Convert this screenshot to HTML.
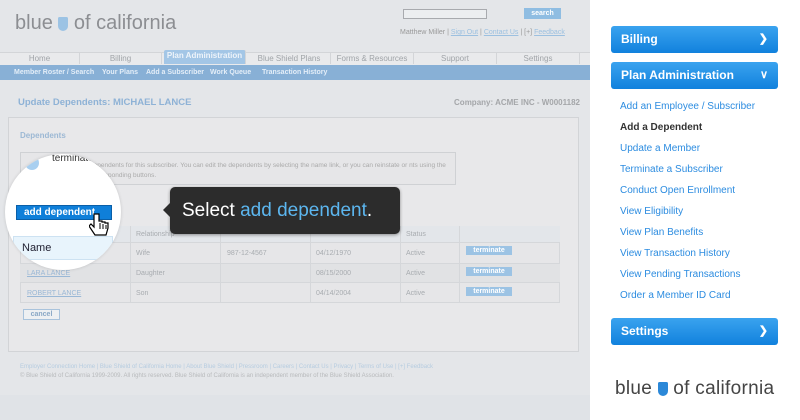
<!DOCTYPE html>
<html><head><style>
*{margin:0;padding:0;box-sizing:border-box}
body{width:800px;height:420px;overflow:hidden;position:relative;background:#fff;font-family:"Liberation Sans",sans-serif}
.a{position:absolute}
#L{left:0;top:0;width:590px;height:420px;background:#e4e6e9}
.tab{position:absolute;top:53px;height:11px;background:#e9eaec;border-right:1px solid #d3d5d8;font-size:8px;color:#a0a4a8;text-align:center;line-height:11px}
.sub{font-size:7px;font-weight:bold;color:#e4eef8;top:69px}
.cell{position:absolute;font-size:7px;color:#a8acb0}
.tb{position:absolute;left:466px;width:46px;height:9px;background:#9cc3e4;color:#fff;font-size:7px;font-weight:bold;text-align:center;line-height:9px}
.rb{position:absolute;left:611px;width:167px;height:27px;border-radius:3px;background:linear-gradient(#3aa3ef,#1181dd);color:#fff;font-weight:bold;font-size:12px;line-height:27px;padding-left:10px}
.rb span{position:absolute;right:10px;top:0;font-size:11px}
.lk{position:absolute;left:620px;font-size:10px;color:#2c8ce0}
</style></head><body>
<div id="L" class="a">
<div class="a" style="left:15px;top:12px;font-size:20px;color:#8c8e92;white-space:nowrap">blue <span style="display:inline-block;width:10px;height:14px;background:#9cc3e4;border-radius:2px 2px 6px 6px;vertical-align:-2px"></span> of california</div>
<div class="a" style="left:403px;top:9px;width:84px;height:10px;border:1px solid #a8aaae;background:#eceef0"></div>
<div class="a" style="left:524px;top:8px;width:37px;height:11px;background:#8fbde2;color:#fff;font-size:7px;text-align:center;line-height:11px;font-weight:bold">search</div>
<div class="a" style="left:400px;top:29px;font-size:7px;color:#999">Matthew Miller | <u style="color:#9cc0e0">Sign Out</u> | <u style="color:#9cc0e0">Contact Us</u> | [+] <u style="color:#9cc0e0">Feedback</u></div>
<div class="a" style="left:0;top:52px;width:590px;height:13px;background:#e9eaec;border-top:1px solid #d3d5d8"></div>
<div class="tab" style="left:0;width:80px">Home</div>
<div class="tab" style="left:80px;width:82px">Billing</div>
<div class="tab" style="left:164px;top:50px;height:14px;width:82px;background:#a3c6e6;color:#eef4fa;font-weight:bold;border-radius:2px 2px 0 0">Plan Administration</div>
<div class="tab" style="left:248px;width:83px">Blue Shield Plans</div>
<div class="tab" style="left:331px;width:83px">Forms &amp; Resources</div>
<div class="tab" style="left:414px;width:83px">Support</div>
<div class="tab" style="left:497px;width:83px">Settings</div>
<div class="a" style="left:0;top:65px;width:590px;height:15px;background:#88b0d6"></div>
<div class="a sub" style="left:14px">Member Roster / Search</div>
<div class="a sub" style="left:102px">Your Plans</div>
<div class="a sub" style="left:146px">Add a Subscriber</div>
<div class="a sub" style="left:210px">Work Queue</div>
<div class="a sub" style="left:262px">Transaction History</div>
<div class="a" style="left:18px;top:97px;font-size:9.5px;font-weight:bold;color:#8eb2d6">Update Dependents: MICHAEL LANCE</div>
<div class="a" style="left:440px;top:98px;font-size:8px;font-weight:bold;color:#a4a6a9;width:140px;text-align:right">Company: ACME INC - W0001182</div>
<div class="a" style="left:8px;top:117px;width:571px;height:235px;border:1px solid #d2d4d7;background:#e8e8ea"></div>
<div class="a" style="left:20px;top:131px;font-size:8px;font-weight:bold;color:#9cb8d4">Dependents</div>
<div class="a" style="left:20px;top:152px;width:436px;height:33px;border:1px solid #cfd1d4;background:#e6e6e8"></div>
<div class="a" style="left:90px;top:161px;font-size:6.5px;color:#aaa;line-height:10px;width:360px">dependents for this subscriber. You can edit the dependents by selecting the name link, or you can reinstate or nts using the corresponding buttons.</div>
<div class="a" style="left:20px;top:226px;width:540px;height:77px;border:1px solid #d5d7da;background:#e6e6e8"></div>
<div class="a" style="left:20px;top:226px;width:540px;height:17px;background:#e3e6ea;border-bottom:1px solid #d5d7da"></div>
<div class="a" style="left:20px;top:263px;width:540px;height:20px;background:#e1e2e4;border-top:1px solid #d5d7da;border-bottom:1px solid #d5d7da"></div>
<div class="a" style="left:130px;top:226px;width:1px;height:77px;background:#d5d7da"></div>
<div class="a" style="left:220px;top:226px;width:1px;height:77px;background:#d5d7da"></div>
<div class="a" style="left:310px;top:226px;width:1px;height:77px;background:#d5d7da"></div>
<div class="a" style="left:400px;top:226px;width:1px;height:77px;background:#d5d7da"></div>
<div class="a" style="left:459px;top:226px;width:1px;height:77px;background:#d5d7da"></div>
<div class="cell" style="left:136px;top:231px">Relationship</div>
<div class="cell" style="left:406px;top:231px">Status</div>
<div class="cell" style="left:136px;top:250px">Wife</div><div class="cell" style="left:227px;top:250px">987-12-4567</div><div class="cell" style="left:316px;top:250px">04/12/1970</div><div class="cell" style="left:406px;top:250px">Active</div>
<div class="cell" style="left:27px;top:270px;color:#9ab8d6;text-decoration:underline">LARA LANCE</div><div class="cell" style="left:136px;top:270px">Daughter</div><div class="cell" style="left:316px;top:270px">08/15/2000</div><div class="cell" style="left:406px;top:270px">Active</div>
<div class="cell" style="left:27px;top:290px;color:#9ab8d6;text-decoration:underline">ROBERT LANCE</div><div class="cell" style="left:136px;top:290px">Son</div><div class="cell" style="left:316px;top:290px">04/14/2004</div><div class="cell" style="left:406px;top:290px">Active</div>
<div class="tb" style="top:246px">terminate</div><div class="tb" style="top:267px">terminate</div><div class="tb" style="top:287px">terminate</div>
<div class="a" style="left:23px;top:309px;width:37px;height:11px;border:1px solid #a9c3dc;background:#eef0f2;font-size:7px;font-weight:bold;color:#8aa8c6;text-align:center;line-height:9px">cancel</div>
<div class="a" style="left:20px;top:364px;font-size:6px;color:#b6cce0">Employer Connection Home | Blue Shield of California Home | About Blue Shield | Pressroom | Careers | Contact Us | Privacy | Terms of Use | [+] Feedback</div>
<div class="a" style="left:20px;top:373px;font-size:6px;color:#b8babc">© Blue Shield of California 1999-2009. All rights reserved. Blue Shield of California is an independent member of the Blue Shield Association.</div>
<div class="a" style="left:0;top:395px;width:590px;height:25px;background:#e0e3e7"></div>
<div class="a" style="left:5px;top:154px;width:116px;height:116px;border-radius:50%;background:#fff;overflow:hidden;box-shadow:0 0 3px rgba(0,0,0,.15)">
 <div class="a" style="left:47px;top:-1px;font-size:10px;color:#333">terminate</div>
 <div class="a" style="left:20px;top:2px;width:14px;height:14px;border-radius:50%;background:#a8cff0"></div>
 <div class="a" style="left:11px;top:51px;width:96px;height:15px;background:#0f7fd9;border:1px solid #0a5fa8;color:#fff;font-size:10px;font-weight:bold;line-height:13px;padding-left:7px">add dependent</div>
 <div class="a" style="left:8px;top:82px;width:100px;height:24px;background:#e8f4fc;border:1px solid #cde2f2;font-size:11px;color:#223;line-height:22px;padding-left:8px">Name</div>
 <svg class="a" style="left:84px;top:58px" width="22" height="26" viewBox="0 0 22 26"><path d="M5 2v13l-3-3-2 2 6 9h11l2-7v-5h-3v-1h-3v-1h-3V2z" fill="#fff" stroke="#000" stroke-width="1.2"/><path d="M11 11v6M14 12v5M17 13v4" stroke="#000"/></svg>
</div>
<div class="a" style="left:170px;top:187px;width:230px;height:47px;background:#2c2c2c;border-radius:5px;color:#fff;font-size:19px;line-height:47px;padding-left:12px;box-shadow:0 1px 3px rgba(0,0,0,.4)">Select <span style="color:#5cb6ef">add dependent</span>.</div>
<div class="a" style="left:163px;top:203px;width:0;height:0;border-top:7px solid transparent;border-bottom:7px solid transparent;border-right:7px solid #2c2c2c"></div>
</div>
<div class="rb" style="top:26px">Billing<span>&#x276F;</span></div>
<div class="rb" style="top:62px">Plan Administration<span>&#x2228;</span></div>
<div class="lk" style="top:101px">Add an Employee / Subscriber</div>
<div class="lk" style="top:122px;color:#333;font-weight:bold">Add a Dependent</div>
<div class="lk" style="top:143px">Update a Member</div>
<div class="lk" style="top:164px">Terminate a Subscriber</div>
<div class="lk" style="top:185px">Conduct Open Enrollment</div>
<div class="lk" style="top:206px">View Eligibility</div>
<div class="lk" style="top:227px">View Plan Benefits</div>
<div class="lk" style="top:248px">View Transaction History</div>
<div class="lk" style="top:269px">View Pending Transactions</div>
<div class="lk" style="top:290px">Order a Member ID Card</div>
<div class="rb" style="top:318px">Settings<span>&#x276F;</span></div>
<div class="a" style="left:615px;top:378px;font-size:19px;color:#444;white-space:nowrap;letter-spacing:0.3px">blue <span style="display:inline-block;width:10px;height:14px;background:#2b88d8;border-radius:2px 2px 6px 6px;vertical-align:-2px"></span> of california</div>
</body></html>
